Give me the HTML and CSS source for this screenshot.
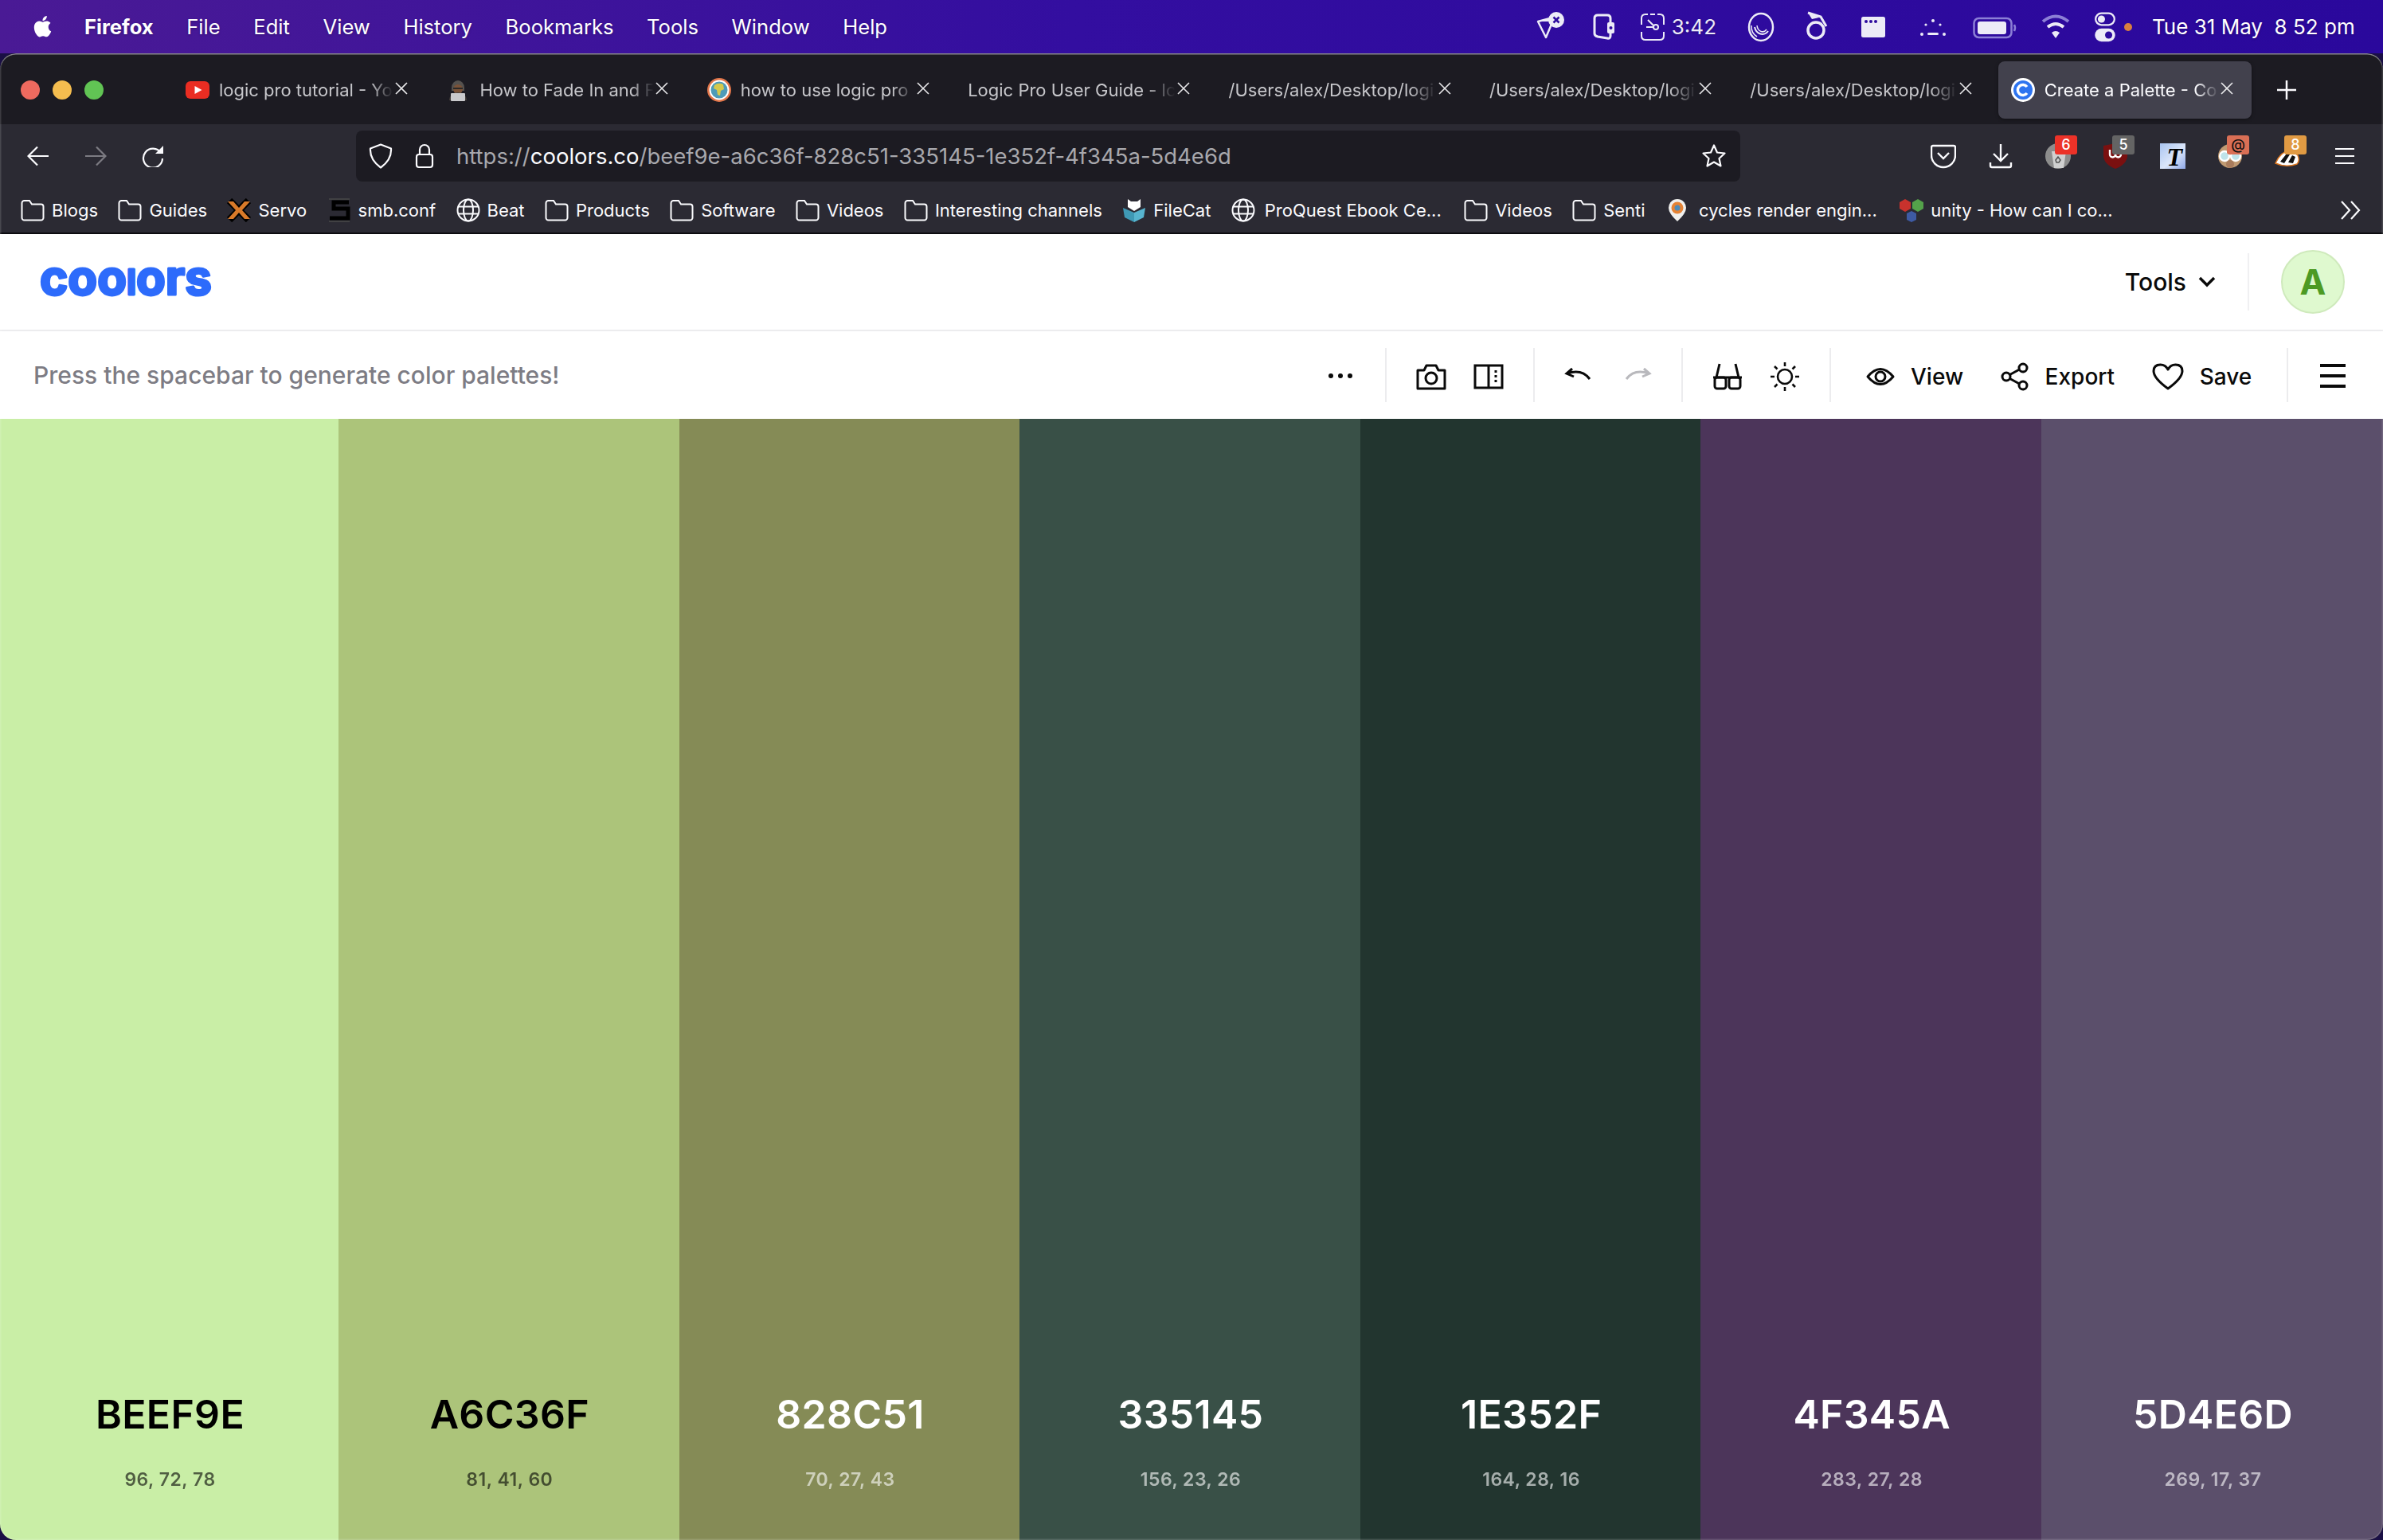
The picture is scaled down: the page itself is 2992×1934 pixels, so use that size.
FILE: index.html
```html
<!DOCTYPE html>
<html lang="en">
<head>
    <meta charset="UTF-8">
    <title>Create a Palette - Coolors</title>
    <link rel="stylesheet" href="styles.css">
</head>
<body>
    <svg class="sprite" aria-hidden="true">
        <symbol id="folder" viewBox="0 0 30 28"><path d="M1.500 5a3 3 0 0 1 3-3h6.500l3 4.500h11.500a3 3 0 0 1 3 3v14a3 3 0 0 1-3 3h-21a3 3 0 0 1-3-3z" fill="none" stroke="#fbfbfe" stroke-width="2"/></symbol>
        <symbol id="globe" viewBox="0 0 30 30"><g fill="none" stroke="#fbfbfe" stroke-width="2"><circle cx="15" cy="15" r="13.500"/><ellipse cx="15" cy="15" rx="6" ry="13.500"/><path d="M2 10.500h26M2 19.500h26"/></g></symbol>
        <symbol id="close" viewBox="0 0 16 16"><path d="M1 1l14 14M15 1L1 15" stroke="#e8e8ea" stroke-width="1.600" fill="none"/></symbol>
    </svg>

    <!-- barra de menu -->
    <header class="menubar">
        <svg class="apple" viewBox="0 0 24 24"><path fill="#fff" d="M17.050 12.040c-.03-2.500 2.040-3.700 2.130-3.760-1.160-1.700-2.970-1.930-3.610-1.960-1.540-.16-3 .9-3.780.9-.78 0-1.980-.88-3.260-.86-1.680.03-3.220.98-4.090 2.480-1.740 3.020-.44 7.500 1.250 9.960.83 1.200 1.820 2.550 3.120 2.500 1.250-.05 1.720-.81 3.230-.81 1.510 0 1.930.81 3.250.78 1.340-.02 2.190-1.220 3.020-2.430.95-1.390 1.340-2.740 1.360-2.810-.03-.01-2.600-1-2.620-3.990zM14.560 4.690c.69-.84 1.160-2 1.030-3.160-1 .04-2.200.66-2.920 1.500-.64.74-1.200 1.930-1.050 3.060 1.110.09 2.250-.57 2.940-1.400z"/></svg>
        <nav class="menu">
            <span class="menu-app">Firefox</span>
            <span>File</span>
            <span>Edit</span>
            <span>View</span>
            <span>History</span>
            <span>Bookmarks</span>
            <span>Tools</span>
            <span>Window</span>
            <span>Help</span>
        </nav>
        <div class="tray">
            <svg class="tray-w40" viewBox="0 0 40 40"><path d="M4 13l15-4 3 5-8 19z" fill="none" stroke="#ecebf7" stroke-width="2.500" stroke-linejoin="round"/><path d="M4 13l15-4 2 4z" fill="#ecebf7"/><circle cx="27" cy="11" r="10" fill="#ecebf7"/><path d="M23.500 7.500l7 7M30.500 7.500l-7 7" stroke="#2d0b9e" stroke-width="2.500"/></svg>
            <svg class="tray-w32" viewBox="0 0 32 40"><path d="M5 9q0-4 4-4h12q4 0 4 4v22q0 4-4 3l-12-2q-4-1-4-4z" fill="none" stroke="#ecebf7" stroke-width="3"/><rect x="21" y="14" width="9" height="14" rx="2" fill="#ecebf7"/><circle cx="25.500" cy="21" r="2" fill="#2d0b9e"/></svg>
            <div class="tray-clock">
                <svg class="tray-w32" viewBox="0 0 32 40"><path d="M10 4H7Q2 4 2 9v8M22 4h3q5 0 5 5v8M2 26v5q0 5 5 5h18q5 0 5-5v-5M13 4h6" fill="none" stroke="#ecebf7" stroke-width="2"/><circle cx="20" cy="20" r="3" fill="none" stroke="#ecebf7" stroke-width="2"/><path d="M10 11l7 7M8 20h9" stroke="#ecebf7" stroke-width="2"/></svg>
                <span>3:42</span>
            </div>
            <svg class="tray-w52" viewBox="0 0 52 40"><g fill="none" stroke="#ecebf7"><ellipse cx="26" cy="20" rx="15" ry="17" stroke-width="2.500"/><path d="M18 20a10 12 0 0 0 17 5" stroke-width="2"/><path d="M21 18a7 9 0 0 0 12 5" stroke-width="1.500"/><path d="M14 18a14 15 0 0 0 7 14" stroke-width="1.500"/></g></svg>
            <svg class="tray-w30" viewBox="0 0 30 40"><path d="M3 2l16 5 7 12" fill="none" stroke="#ecebf7" stroke-width="3"/><path d="M3 2l5 8 9-2z" fill="#ecebf7"/><circle cx="13" cy="24" r="10" fill="none" stroke="#ecebf7" stroke-width="3.500"/></svg>
            <svg class="tray-w50" viewBox="0 0 50 40"><rect x="10" y="7" width="30" height="26" rx="2.500" fill="#ecebf7"/><circle cx="16" cy="13" r="2" fill="#2d0b9e"/><circle cx="22" cy="13" r="2" fill="#2d0b9e"/><circle cx="28" cy="13" r="2" fill="#2d0b9e"/></svg>
            <svg class="tray-w40" viewBox="0 0 40 40"><g fill="#ecebf7"><circle cx="20" cy="12" r="2"/><circle cx="6" cy="29" r="2"/><circle cx="34" cy="29" r="2"/><circle cx="11" cy="17" r="1.600"/><circle cx="29" cy="17" r="1.600"/><rect x="13" y="27" width="14" height="3" rx="1.500"/></g></svg>
            <svg class="tray-w56" viewBox="0 0 56 40"><rect x="1.500" y="9" width="47" height="24" rx="6" fill="none" stroke="#8c7fd6" stroke-width="2.500"/><rect x="6" y="13" width="36" height="16" rx="3" fill="#ecebf7"/><path d="M52 17q2 4 0 8" stroke="#8c7fd6" stroke-width="2.500" fill="none"/></svg>
            <svg class="tray-w36" viewBox="0 0 36 40"><path d="M2 13q16-13 32 0" fill="none" stroke="#8c7fd6" stroke-width="4"/><path d="M8 20q10-8 20 0" fill="none" stroke="#ecebf7" stroke-width="4"/><path d="M13 27q5-4 10 0l-5 7z" fill="#ecebf7"/></svg>
            <svg class="tray-w28" viewBox="0 0 28 44"><rect x="1" y="3" width="26" height="16" rx="8" fill="none" stroke="#ecebf7" stroke-width="2.500"/><circle cx="9" cy="11" r="5" fill="#ecebf7"/><rect x="0" y="24" width="28" height="18" rx="9" fill="#ecebf7"/><circle cx="19" cy="33" r="5" fill="#2d0b9e"/></svg>
            <span class="tray-dot"></span>
            <span class="tray-date">Tue 31 May&nbsp; 8 52 pm</span>
        </div>
    </header>

    <div class="window">
        <!-- pestañas -->
        <div class="tabstrip">
            <div class="traffic">
                <span class="dot dot-red"></span>
                <span class="dot dot-yellow"></span>
                <span class="dot dot-green"></span>
            </div>
            <div class="tabs">
                <div class="tab">
                    <svg class="favicon" viewBox="0 0 30 30"><rect x="0" y="4" width="30" height="22" rx="6" fill="#ea2d22"/><path d="M11.500 10l9 5-9 5z" fill="#fff"/></svg>
                    <span class="tab-title">logic pro tutorial - Yo</span>
                    <svg class="tab-close"><use href="#close"/></svg>
                </div>
                <div class="tab">
                    <svg class="favicon" viewBox="0 0 30 30"><path d="M7 12a8 9 0 0 1 16 0v4H7z" fill="#55524f"/><ellipse cx="15" cy="14" rx="6" ry="6" fill="#7a5238"/><path d="M9 12h12v2H9z" fill="#2c2a28"/><path d="M4 28q1-10 11-10t11 10z" fill="#46403c"/><rect x="6" y="19" width="18" height="10" rx="1" fill="#c9c9cc"/></svg>
                    <span class="tab-title">How to Fade In and F</span>
                    <svg class="tab-close"><use href="#close"/></svg>
                </div>
                <div class="tab">
                    <svg class="favicon" viewBox="0 0 30 30"><circle cx="15" cy="15" r="15" fill="#e2764a"/><circle cx="15" cy="15" r="12.500" fill="#fff"/><circle cx="15" cy="15" r="10.500" fill="#4e9bb8"/><path d="M9 9q5-4 11-1l1 6-4 2-1 6-3-1-1-6-4-2z" fill="#d5c94c"/></svg>
                    <span class="tab-title">how to use logic pro</span>
                    <svg class="tab-close"><use href="#close"/></svg>
                </div>
                <div class="tab">
                    <span class="tab-title">Logic Pro User Guide - lc</span>
                    <svg class="tab-close"><use href="#close"/></svg>
                </div>
                <div class="tab">
                    <span class="tab-title">/Users/alex/Desktop/logi</span>
                    <svg class="tab-close"><use href="#close"/></svg>
                </div>
                <div class="tab">
                    <span class="tab-title">/Users/alex/Desktop/logi</span>
                    <svg class="tab-close"><use href="#close"/></svg>
                </div>
                <div class="tab">
                    <span class="tab-title">/Users/alex/Desktop/logi</span>
                    <svg class="tab-close"><use href="#close"/></svg>
                </div>
                <div class="tab tab-active">
                    <svg class="favicon" viewBox="0 0 30 30"><circle cx="15" cy="15" r="15" fill="#fff"/><circle cx="15" cy="15" r="12" fill="#2e74f0"/><path d="M20 11a6.500 6.500 0 1 0 0 8" fill="none" stroke="#fff" stroke-width="3.500"/></svg>
                    <span class="tab-title">Create a Palette - Co</span>
                    <svg class="tab-close"><use href="#close"/></svg>
                </div>
            </div>
            <svg class="tab-new" viewBox="0 0 26 26"><path d="M13 1v24M1 13h24" stroke="#fbfbfe" stroke-width="2.500"/></svg>
        </div>

        <!-- barra de navegacion -->
        <div class="navbar">
            <svg class="nav-icon" viewBox="0 0 28 28"><path d="M27 14H2M13 2.500L1.500 14 13 25.500" fill="none" stroke="#fbfbfe" stroke-width="2.200"/></svg>
            <svg class="nav-icon" viewBox="0 0 28 28"><path d="M1 14h25M15 2.500L26.500 14 15 25.500" fill="none" stroke="#7c7b82" stroke-width="2.200"/></svg>
            <svg class="nav-icon" viewBox="0 0 28 28"><path d="M24 10a12 12 0 1 0 2 7" fill="none" stroke="#fbfbfe" stroke-width="2.200"/><path d="M27 1v10H17z" fill="#fbfbfe"/></svg>
            <div class="address">
                <svg class="addr-shield" viewBox="0 0 30 32"><path d="M15 1.500L28 6.500q1 14-13 24Q1 20.500 2 6.500z" fill="none" stroke="#fbfbfe" stroke-width="2.200" stroke-linejoin="round"/></svg>
                <svg class="addr-lock" viewBox="0 0 24 32"><rect x="2" y="14" width="20" height="16" rx="3" fill="none" stroke="#fbfbfe" stroke-width="2.200"/><path d="M6 14V8a6 6 0 0 1 12 0v6" fill="none" stroke="#fbfbfe" stroke-width="2.200"/></svg>
                <span class="addr-url">https://<b>coolors.co</b>/beef9e-a6c36f-828c51-335145-1e352f-4f345a-5d4e6d</span>
                <svg class="addr-star" viewBox="0 0 32 32"><path d="M16 2.500l4 9 9.500 1-7 6.500 2 9.500-8.500-5-8.500 5 2-9.500-7-6.500 9.500-1z" fill="none" stroke="#fbfbfe" stroke-width="2.200" stroke-linejoin="round"/></svg>
            </div>
            <div class="extensions">
                <div class="ext"><svg class="ext-icon" viewBox="0 0 32 32"><path d="M3 3h26q2 0 2 2v10a15 15 0 0 1-30 0V5q0-2 2-2z" fill="none" stroke="#fbfbfe" stroke-width="2.400"/><path d="M9 12l7 7 7-7" fill="none" stroke="#fbfbfe" stroke-width="2.400"/></svg></div>
                <div class="ext"><svg class="ext-icon" viewBox="0 0 32 32"><path d="M16 1v21M7 13l9 9 9-9M3 24v4q0 2 2 2h22q2 0 2-2v-4" fill="none" stroke="#fbfbfe" stroke-width="2.400"/></svg></div>
                <div class="ext">
                    <svg class="ext-icon" viewBox="0 0 32 32"><circle cx="16" cy="16" r="16" fill="#8d8d8d"/><path d="M8 10h18l-3 21H11z" fill="#d0d0d0"/><path d="M13 21l3-4 3 4-2 3h-3z" fill="none" stroke="#555" stroke-width="1.600"/></svg>
                    <span class="badge badge-red">6</span>
                </div>
                <div class="ext">
                    <svg class="ext-icon" viewBox="0 0 32 32"><path d="M1 3l15-3 15 3v12q0 11-15 17Q1 26 1 15z" fill="#7a1010"/><path d="M9 8v6a3 3 0 0 0 7 0v-3 3a3 3 0 0 0 7 0V8" fill="none" stroke="#fff" stroke-width="2.400"/></svg>
                    <span class="badge badge-grey">5</span>
                </div>
                <div class="ext"><span class="ext-t">T</span></div>
                <div class="ext">
                    <svg class="ext-icon" viewBox="0 0 32 32"><circle cx="16" cy="16" r="15" fill="#c09a72"/><circle cx="16" cy="26" r="5" fill="#a97c5d"/><circle cx="9" cy="16" r="6" fill="#bfe3ea" stroke="#fff" stroke-width="2.400"/><circle cx="23" cy="16" r="6" fill="#bfe3ea" stroke="#fff" stroke-width="2.400"/></svg>
                    <span class="badge badge-coral">@</span>
                </div>
                <div class="ext">
                    <svg class="ext-icon" viewBox="0 0 32 32"><path d="M1 25Q7 11 19 8l10 7q3 7-1 11-14 5-27-1z" fill="#fff" stroke="#d9741f" stroke-width="1.500"/><path d="M7 23l8-10 4 1-7 11zM17 24l5-9 4 2-3 8z" fill="#111"/></svg>
                    <span class="badge badge-amber">8</span>
                </div>
                <div class="ext"><svg class="ext-icon ext-menu" viewBox="0 0 24 24"><path d="M0 3h24M0 12h24M0 21h24" stroke="#fbfbfe" stroke-width="2.200"/></svg></div>
            </div>
        </div>

        <!-- marcadores -->
        <div class="bookmarks">
            <a class="bm"><svg class="bm-icon"><use href="#folder"/></svg>Blogs</a>
            <a class="bm"><svg class="bm-icon"><use href="#folder"/></svg>Guides</a>
            <a class="bm"><svg class="bm-icon" viewBox="0 0 30 30"><path d="M3 3l24 24M27 3L3 27" stroke="#000" stroke-width="9"/><path d="M1 4h7l7 8 7-8h7l-10 11 10 11h-7l-7-8-7 8H1l10-11z" fill="#d97a29"/></svg>Servo</a>
            <a class="bm"><svg class="bm-icon" viewBox="0 0 30 30"><path d="M27 5H8v8h18v12H3" fill="none" stroke="#000" stroke-width="5"/><path d="M2 1h26M2 29h26" stroke="#4a4a4a" stroke-width="1.500"/></svg>smb.conf</a>
            <a class="bm"><svg class="bm-icon"><use href="#globe"/></svg>Beat</a>
            <a class="bm"><svg class="bm-icon"><use href="#folder"/></svg>Products</a>
            <a class="bm"><svg class="bm-icon"><use href="#folder"/></svg>Software</a>
            <a class="bm"><svg class="bm-icon"><use href="#folder"/></svg>Videos</a>
            <a class="bm"><svg class="bm-icon"><use href="#folder"/></svg>Interesting channels</a>
            <a class="bm"><svg class="bm-icon" viewBox="0 0 30 30"><path d="M1 12l14 6v12L3 24z" fill="#3f99b5"/><path d="M29 12l-14 6v12l12-6z" fill="#57b4cf"/><path d="M7 11V1l4 3h8l4-3v10l-8 5z" fill="#fff"/></svg>FileCat</a>
            <a class="bm bm-wide"><svg class="bm-icon"><use href="#globe"/></svg>ProQuest Ebook Ce...</a>
            <a class="bm bm-next"><svg class="bm-icon"><use href="#folder"/></svg>Videos</a>
            <a class="bm"><svg class="bm-icon"><use href="#folder"/></svg>Senti</a>
            <a class="bm bm-wide"><svg class="bm-icon" viewBox="0 0 30 30"><path d="M15 1a11 11 0 0 1 11 11q0 7-11 17Q4 19 4 12A11 11 0 0 1 15 1z" fill="#f0f0ee"/><circle cx="15" cy="12" r="7.500" fill="#e58335"/><circle cx="15" cy="12" r="3.500" fill="#4d8bb8"/></svg>cycles render engin...</a>
            <a class="bm bm-next"><svg class="bm-icon" viewBox="0 0 30 30"><path d="M0 5l7-4 7 4v8l-7 4-7-4z" fill="#c8322d"/><path d="M16 5l7-4 7 4v8l-7 4-7-4z" fill="#54a24a"/><path d="M9 19l6-3 6 3v8l-6 3-6-3z" fill="#3e5aa3"/></svg>unity - How can I co...</a>
            <svg class="bm-more" viewBox="0 0 26 26"><path d="M2 2l10 11L2 24M14 2l10 11-10 11" fill="none" stroke="#fbfbfe" stroke-width="2.200"/></svg>
        </div>

        <!-- cabecera de coolors -->
        <div class="app-header">
            <svg class="logo" viewBox="0 0 220 36" role="img" aria-label="coolors"><text class="logo-text" x="2" y="34" textLength="216" lengthAdjust="spacingAndGlyphs">coo<tspan class="logo-l">l</tspan>ors</text></svg>
            <div class="app-right">
                <span class="app-tools">Tools</span>
                <svg class="app-chevron" viewBox="0 0 22 14"><path d="M2 2l9 9 9-9" fill="none" stroke="#0a0a0a" stroke-width="3.500"/></svg>
                <span class="app-sep"></span>
                <span class="avatar">A</span>
            </div>
        </div>

        <!-- barra de herramientas -->
        <div class="toolbar">
            <p class="hint">Press the spacebar to generate color palettes!</p>
            <svg class="tool-dots" viewBox="0 0 32 8"><circle cx="4" cy="4" r="3" fill="#0a0a0a"/><circle cx="16" cy="4" r="3" fill="#0a0a0a"/><circle cx="28" cy="4" r="3" fill="#0a0a0a"/></svg>
            <div class="tool-group">
                <svg class="tool" viewBox="0 0 40 40"><path d="M3 12h8l3-6h12l3 6h8v23H3z" fill="none" stroke="#0a0a0a" stroke-width="3" stroke-linejoin="round"/><circle cx="20" cy="22" r="7" fill="none" stroke="#0a0a0a" stroke-width="3"/></svg>
                <svg class="tool" viewBox="0 0 40 40"><rect x="3" y="6" width="34" height="28" fill="none" stroke="#0a0a0a" stroke-width="3"/><path d="M20 6v28" stroke="#0a0a0a" stroke-width="3"/><path d="M29 12v3M29 18v3M29 24v3" stroke="#0a0a0a" stroke-width="3"/></svg>
            </div>
            <div class="tool-group">
                <svg class="tool" viewBox="0 0 40 40"><path d="M11 10l-7 6 9 4M5 16q18-6 28 7" fill="none" stroke="#0a0a0a" stroke-width="3"/></svg>
                <svg class="tool" viewBox="0 0 40 40"><path d="M29 10l7 6-9 4M35 16q-18-6-28 7" fill="none" stroke="#b9b9bd" stroke-width="3"/></svg>
            </div>
            <div class="tool-group">
                <svg class="tool" viewBox="0 0 40 40"><path d="M10 4L6 21M30 4l4 17" fill="none" stroke="#0a0a0a" stroke-width="3"/><path d="M2 21h36" stroke="#0a0a0a" stroke-width="3"/><rect x="4" y="21" width="14" height="14" rx="3" fill="none" stroke="#0a0a0a" stroke-width="3"/><rect x="22" y="21" width="14" height="14" rx="3" fill="none" stroke="#0a0a0a" stroke-width="3"/></svg>
                <svg class="tool" viewBox="0 0 40 40"><circle cx="20" cy="20" r="9" fill="none" stroke="#0a0a0a" stroke-width="2.600"/><path d="M20 2v5M20 33v5M2 20h5M33 20h5M7 7l3.500 3.500M29.500 29.500L33 33M33 7l-3.500 3.500M10.500 29.500L7 33" stroke="#0a0a0a" stroke-width="2.600"/></svg>
            </div>
            <div class="tool-actions">
                <button class="action">
                    <svg class="action-icon" viewBox="0 0 36 36"><path d="M2 18Q18-1 34 18 18 37 2 18z" fill="none" stroke="#0a0a0a" stroke-width="3" stroke-linejoin="round"/><circle cx="18" cy="18" r="6" fill="none" stroke="#0a0a0a" stroke-width="3"/></svg>
                    View
                </button>
                <button class="action">
                    <svg class="action-icon" viewBox="0 0 36 36"><circle cx="7" cy="18" r="5" fill="none" stroke="#0a0a0a" stroke-width="3"/><circle cx="28" cy="7" r="5" fill="none" stroke="#0a0a0a" stroke-width="3"/><circle cx="28" cy="29" r="5" fill="none" stroke="#0a0a0a" stroke-width="3"/><path d="M11.500 15.500l12-6.500M11.500 20.500l12 6.500" stroke="#0a0a0a" stroke-width="3"/></svg>
                    Export
                </button>
                <button class="action">
                    <svg class="action-icon action-heart" viewBox="0 0 40 36"><path d="M20 33Q2 20 2 11 2 3 10.500 3 17 3 20 9q3-6 9.500-6Q38 3 38 11q0 9-18 22z" fill="none" stroke="#0a0a0a" stroke-width="3" stroke-linejoin="round"/></svg>
                    Save
                </button>
            </div>
            <div class="tool-menu">
                <svg class="tool-burger" viewBox="0 0 32 32"><path d="M0 3h32M0 16h32M0 29h32" stroke="#0a0a0a" stroke-width="4"/></svg>
            </div>
        </div>

        <!-- paleta -->
        <main class="palette">
            <section class="swatch swatch-beef"><h2 class="hex">BEEF9E</h2><p class="hsb">96, 72, 78</p></section>
            <section class="swatch swatch-a6c3"><h2 class="hex">A6C36F</h2><p class="hsb">81, 41, 60</p></section>
            <section class="swatch swatch-828c on-dark"><h2 class="hex">828C51</h2><p class="hsb">70, 27, 43</p></section>
            <section class="swatch swatch-3351 on-dark"><h2 class="hex">335145</h2><p class="hsb">156, 23, 26</p></section>
            <section class="swatch swatch-1e35 on-dark"><h2 class="hex">1E352F</h2><p class="hsb">164, 28, 16</p></section>
            <section class="swatch swatch-4f34 on-dark"><h2 class="hex">4F345A</h2><p class="hsb">283, 27, 28</p></section>
            <section class="swatch swatch-5d4e on-dark"><h2 class="hex">5D4E6D</h2><p class="hsb">269, 17, 37</p></section>
        </main>
    </div>
</body>
</html>
```

FILE: styles.css
```css
* {
    box-sizing: border-box;
}
html, body {
    margin: 0;
    padding: 0;
    height: 100%;
}
body {
    display: flex;
    flex-direction: column;
    overflow: hidden;
    background-color: #1a0f45;
    font-family: Inter, "Noto Sans", sans-serif;
}
.sprite {
    display: none;
}

/* menu bar */
.menubar {
    height: 67px;
    flex-shrink: 0;
    display: flex;
    align-items: center;
    padding-left: 38px;
    padding-right: 34px;
    background: linear-gradient(90deg, #4a1a95 0%, #330ea0 45%, #2a089c 100%);
    color: #fff;
    font-size: 26px;
    text-shadow: 0 1px 3px rgba(0, 0, 0, .25);
}
.apple {
    width: 32px;
    height: 34px;
    margin-right: 36px;
}
.menu {
    display: flex;
    gap: 41.600px;
    font-size: 25.600px;
}
.menu-app {
    font-weight: 700;
}
.tray {
    margin-left: auto;
    display: flex;
    align-items: center;
    gap: 30px;
}
.tray svg {
    height: 40px;
}
.tray-w28 { width: 28px; }
.tray-w30 { width: 30px; }
.tray-w32 { width: 32px; }
.tray-w36 { width: 36px; }
.tray-w40 { width: 40px; }
.tray-w50 { width: 50px; }
.tray-w52 { width: 52px; }
.tray-w56 { width: 56px; }
.tray-clock {
    display: flex;
    align-items: center;
    gap: 8px;
    color: #ecebf7;
}
.tray-dot {
    width: 10px;
    height: 10px;
    margin-left: -20px;
    border-radius: 50%;
    background: #d9803f;
}
.tray-date {
    width: 256px;
    margin-left: -5px;
    white-space: nowrap;
}

/* window */
.window {
    flex: 1;
    min-height: 0;
    display: flex;
    flex-direction: column;
    position: relative;
    border-radius: 20px;
    overflow: hidden;
    background: #1c1b22;
}
.window::after {
    content: "";
    position: absolute;
    inset: 0;
    border-radius: 20px;
    box-shadow: inset 0 1.500px 0 rgba(255, 255, 255, .38), inset 0 0 0 1.500px rgba(255, 255, 255, .14);
    pointer-events: none;
}

/* tabs */
.tabstrip {
    height: 89px;
    flex-shrink: 0;
    display: flex;
    align-items: center;
    padding-left: 26px;
    padding-top: 2px;
}
.traffic {
    display: flex;
    gap: 16px;
    width: 191px;
}
.dot {
    width: 24px;
    height: 24px;
    border-radius: 50%;
}
.dot-red { background: #ee6a5f; }
.dot-yellow { background: #f5bd4f; }
.dot-green { background: #61c454; }
.tabs {
    display: flex;
    gap: 9.400px;
}
.tab {
    width: 318px;
    height: 72px;
    display: flex;
    align-items: center;
    padding: 0 23px 0 16px;
    border-radius: 8px;
    color: #c6c6ca;
    font-size: 22px;
}
.tab-active {
    background: #42414d;
    color: #fbfbfe;
    box-shadow: 0 1px 4px rgba(0, 0, 0, .4);
}
.favicon {
    width: 30px;
    height: 30px;
    flex-shrink: 0;
    margin-right: 12px;
}
.tab-title {
    flex: 1;
    min-width: 0;
    white-space: nowrap;
    -webkit-mask-image: linear-gradient(90deg, #000 86%, transparent 99%);
    mask-image: linear-gradient(90deg, #000 86%, transparent 99%);
}
.tab-close {
    width: 16px;
    height: 16px;
    flex-shrink: 0;
    margin-top: -4px;
}
.tab-new {
    width: 26px;
    height: 26px;
    margin-left: 31px;
}

/* nav bar */
.navbar {
    height: 80px;
    flex-shrink: 0;
    display: flex;
    align-items: center;
    padding-left: 34px;
    padding-right: 12px;
    background: #2b2a33;
}
.nav-icon {
    width: 28px;
    height: 28px;
    margin-right: 44px;
}
.address {
    width: 1738px;
    height: 64px;
    margin-left: 197px;
    display: flex;
    align-items: center;
    padding: 0 17px 0 16px;
    border-radius: 8px;
    background: #1c1b22;
    color: #a8a8ad;
    font-size: 27.500px;
}
.addr-shield {
    width: 30px;
    height: 32px;
    margin-right: 28px;
}
.addr-lock {
    width: 24px;
    height: 32px;
    margin-right: 28px;
}
.addr-url {
    flex: 1;
    white-space: nowrap;
}
.addr-url b {
    font-weight: 400;
    color: #fbfbfe;
}
.addr-star {
    width: 32px;
    height: 32px;
}
.extensions {
    margin-left: auto;
    display: flex;
}
.ext {
    width: 72px;
    height: 80px;
    display: flex;
    align-items: center;
    justify-content: center;
    position: relative;
}
.ext-icon {
    width: 32px;
    height: 32px;
}
.ext-menu {
    width: 24px;
    height: 24px;
}
.ext-t {
    width: 32px;
    height: 32px;
    display: flex;
    align-items: flex-end;
    justify-content: flex-end;
    padding-right: 4px;
    background: linear-gradient(135deg, #a9c4f0, #dbe6fa 55%, #8fa8e8);
    color: #000;
    font-family: "Liberation Serif", serif;
    font-size: 32px;
    font-style: italic;
    font-weight: 700;
    line-height: 30px;
}
.badge {
    position: absolute;
    left: 32px;
    top: 14px;
    width: 28px;
    height: 24px;
    border-radius: 3px;
    color: #fff;
    font-size: 18px;
    font-weight: 500;
    line-height: 24px;
    text-align: center;
}
.badge-red { background: #ec3228; }
.badge-grey { background: #646464; }
.badge-coral { background: #d96f55; color: #111; }
.badge-amber { background: #e09a43; }

/* bookmarks */
.bookmarks {
    height: 58px;
    flex-shrink: 0;
    display: flex;
    align-items: center;
    gap: 25.400px;
    padding: 0 26px;
    background: #2b2a33;
    border-bottom: 2px solid #0c0c10;
    color: #fbfbfe;
    font-size: 22px;
}
.bm {
    display: flex;
    align-items: center;
    gap: 9px;
    white-space: nowrap;
}
.bm-wide {
    gap: 12px;
}
.bm-next {
    margin-left: 3px;
}
.bm-icon {
    width: 30px;
    height: 30px;
    flex-shrink: 0;
}
.bm-more {
    width: 26px;
    height: 26px;
    margin-left: auto;
    margin-right: 2px;
}

/* app header */
.app-header {
    height: 122px;
    flex-shrink: 0;
    display: flex;
    align-items: center;
    padding: 0 48px;
    background: #fff;
    border-bottom: 2px solid #ececee;
}
.logo {
    width: 220px;
    height: 36px;
    overflow: visible;
}
.logo-text {
    font-family: Inter, sans-serif;
    font-size: 60px;
    font-weight: 700;
    fill: #2d6bfb;
    stroke: #2d6bfb;
    stroke-width: 3px;
    stroke-linejoin: round;
}
.logo-l {
    font-size: 44px;
}
.app-right {
    margin-left: auto;
    display: flex;
    align-items: center;
}
.app-tools {
    color: #0a0a0a;
    font-size: 30px;
    font-weight: 500;
}
.app-chevron {
    width: 22px;
    height: 14px;
    margin-left: 15px;
}
.app-sep {
    width: 2px;
    height: 72px;
    margin: 0 40px;
    background: #f0f0f2;
}
.avatar {
    width: 80px;
    height: 80px;
    display: flex;
    align-items: center;
    justify-content: center;
    border-radius: 50%;
    border: 2px solid #cfeabc;
    background: #dff9cf;
    color: #4d9a24;
    font-size: 44px;
    font-weight: 700;
}

/* toolbar */
.toolbar {
    height: 110px;
    flex-shrink: 0;
    display: flex;
    align-items: center;
    padding-left: 42px;
    background: #fff;
}
.hint {
    flex: 1;
    margin: 0;
    color: #7d7c84;
    font-size: 30px;
    font-weight: 500;
    white-space: nowrap;
}
.tool-dots {
    width: 32px;
    height: 8px;
    margin-right: 40px;
    margin-top: 2px;
}
.tool-group {
    width: 186px;
    height: 68px;
    display: flex;
    align-items: center;
    justify-content: center;
    gap: 32px;
    border-left: 2px solid #ececee;
}
.tool {
    width: 40px;
    height: 40px;
    margin-top: 4px;
}
.tool-actions {
    width: 574px;
    height: 68px;
    display: flex;
    align-items: center;
    gap: 46.500px;
    padding-left: 44px;
    padding-top: 4px;
    border-left: 2px solid #ececee;
}
.action {
    display: flex;
    align-items: center;
    gap: 20px;
    padding: 0;
    border: none;
    background: none;
    color: #0a0a0a;
    font-family: inherit;
    font-size: 28px;
    font-weight: 500;
}
.action-icon {
    width: 36px;
    height: 36px;
}
.action-heart {
    width: 40px;
}
.tool-menu {
    width: 121px;
    height: 68px;
    display: flex;
    align-items: center;
    padding-left: 40px;
    padding-top: 2px;
    border-left: 2px solid #ececee;
}
.tool-burger {
    width: 32px;
    height: 32px;
}

/* palette */
.palette {
    flex: 1;
    min-height: 0;
    display: grid;
    grid-template-columns: 425px repeat(5, 427.600px) 1fr;
}
.swatch {
    display: flex;
    flex-direction: column;
    align-items: center;
    justify-content: flex-end;
    padding-bottom: 61px;
    padding-left: 2px;
    color: #000;
}
.swatch.on-dark {
    color: #fff;
}
.hex {
    margin: 0;
    font-size: 50px;
    font-weight: 600;
    line-height: 60px;
    letter-spacing: .3px;
}
.hsb {
    margin: 37px 0 0;
    font-size: 23px;
    font-weight: 600;
    line-height: 30px;
    letter-spacing: .5px;
    opacity: .6;
}
.swatch-beef { background: #c9eea6; }
.swatch-a6c3 { background: #acc47a; }
.swatch-828c { background: #858b56; }
.swatch-3351 { background: #395047; }
.swatch-1e35 { background: #22352f; }
.swatch-4f34 { background: #4c355a; }
.swatch-5d4e { background: #5b4f6b; }
```
